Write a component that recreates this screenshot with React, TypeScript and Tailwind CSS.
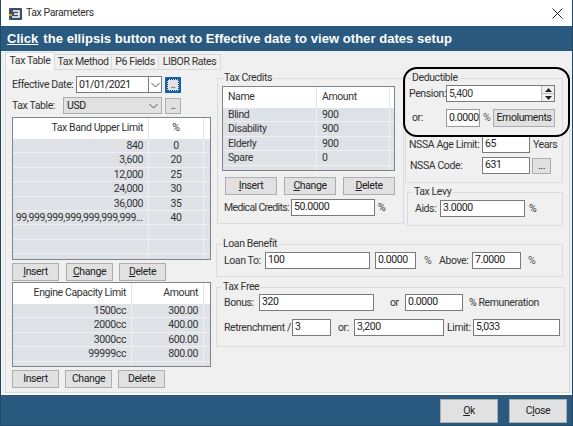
import React from "react";

const inputBase = "flex items-center bg-white border border-[#7a7a7a] h-[17px] px-[2px] text-[10.5px] leading-none text-[#222] overflow-hidden";
const Inp = ({ w, v, cls = "" }: { w: string; v: string; cls?: string }) => (
  <div className={`${inputBase} ${w} ${cls}`}>{v}</div>
);
const Btn = ({ w, h = "h-[18px]", children, cls = "" }: { w: string; h?: string; children: React.ReactNode; cls?: string }) => (
  <div className={`flex items-center justify-center bg-[#e1e1e1] border border-[#adadad] text-[10.5px] leading-none text-[#222] ${w} ${h} ${cls}`}>{children}</div>
);
const U = ({ c }: { c: string }) => <span className="underline">{c}</span>;
const Group = ({ title, cls, children }: { title: string; cls: string; children: React.ReactNode }) => (
  <div className={`border border-[#dcdcdc] ${cls}`}>
    <div className="-mt-[8px] ml-[5px] w-fit bg-[#f0f0f0] px-[1px] text-[10.5px] leading-[14px] text-[#333]">{title}</div>
    {children}
  </div>
);
const Grid = ({ w, h, cols, head, rows, rowCount, aligns }: { w: string; h: string; cols: string[]; head: string[]; rows: string[][]; rowCount: number; aligns: string[] }) => (
  <div className={`border border-[#7f858c] bg-[#f0f0f0] overflow-hidden ${w} ${h}`}>
    <div className="flex h-[21px] bg-white">
      {head.map((t, i) => (
        <div key={i} className={`flex items-center px-[5px] border-r border-[#e5e5e5] text-[10.5px] leading-none text-[#333] ${cols[i]} ${aligns[i]}`}>{t}</div>
      ))}
    </div>
    {Array.from({ length: rowCount }).map((_, r) => (
      <div key={r} className="flex h-[14.4px] bg-[#dee2e6] border-b border-[#f0f0f0]">
        {cols.map((c, i) => (
          <div key={i} className={`flex items-center whitespace-nowrap overflow-hidden px-[5px] pt-[1px] border-r border-[#f0f0f0] text-[10.5px] leading-none text-[#333] ${c} ${aligns[i]}`}>{rows[r]?.[i] ?? ""}</div>
        ))}
      </div>
    ))}
  </div>
);

export default function App() {
  return (
    <div className="relative flex h-[426px] w-[573px] flex-col overflow-hidden whitespace-nowrap border border-[#1f4a66] border-t-0 bg-white tracking-[-0.4px] text-[#222]" style={{ fontFamily: 'Roboto, "Liberation Sans", Arial, sans-serif' }}>
      <div className="flex h-[26px] shrink-0 items-center bg-white pl-[7px] pr-[9px]">
        <svg width="15" height="15" viewBox="0 0 15 15" className="mr-[3px]">
          <rect x="1" y="2" width="13" height="12" rx="1" fill="#3d4f63" />
          <path d="M1 9h3" stroke="#e8912d" strokeWidth="2" />
          <path d="M5 5h6v6H4M6 8h5" fill="none" stroke="#fff" strokeWidth="1.5" />
        </svg>
        <span className="text-[10.5px] text-[#333]">Tax Parameters</span>
        <svg width="11" height="11" viewBox="0 0 11 11" className="ml-auto">
          <path d="M0.5 0.5L10.5 10.5M10.5 0.5L0.5 10.5" stroke="#222" strokeWidth="1" />
        </svg>
      </div>
      <div className="flex h-[25px] shrink-0 items-center bg-[#2a5a80] pl-[6px] text-[13px] font-bold tracking-[0.05px] text-white" style={{ fontFamily: '"Liberation Sans", Arial, sans-serif' }}>
        <span className="underline">Click</span>
        <span className="ml-[5px]">the ellipsis button next to Effective date to view other dates setup</span>
      </div>
      <div className="flex-1 bg-[#f0f0f0] pt-[1px]">
        <div className="flex h-[18px] pl-[4px] text-[10.5px] leading-none text-[#333]">
          <div className="flex w-[50px] items-center justify-center border border-b-0 border-[#d9d9d9] bg-[#f8f8f8]">Tax Table</div>
          <div className="mt-[2px] flex w-[57px] items-center justify-center border-y border-r border-[#d9d9d9]">Tax Method</div>
          <div className="mt-[2px] flex w-[47px] items-center justify-center border-y border-r border-[#d9d9d9]">P6 Fields</div>
          <div className="mt-[2px] flex w-[62px] items-center justify-center border-y border-r border-[#d9d9d9]">LIBOR Rates</div>
        </div>
        <div className="ml-[4px] flex h-[323px] w-[565px] border border-t-0 border-[#d9d9d9] bg-[#f0f0f0]">
          <div className="flex w-[211px] shrink-0 flex-col pl-[6px] pt-[6px]">
            <div className="flex h-[17px] items-center">
              <span className="w-[64px] text-[10.5px] text-[#333]">Effective Date:</span>
              <div className="flex h-[17px] w-[86px] items-center border border-[#7a7a7a] bg-white pl-[2px] text-[10.5px]">
                01/01/2021
                <div className="ml-auto flex h-full w-[13px] items-center justify-center border-l border-[#7a7a7a]">
                  <svg width="9" height="6" viewBox="0 0 9 6"><path d="M0.5 1L4.5 5L8.5 1" fill="none" stroke="#555" /></svg>
                </div>
              </div>
              <div className="ml-[3px] flex h-[16px] w-[16px] items-center justify-center border-2 border-[#0a64c8] bg-[#e1e1e1] text-[10px] leading-none">
                <div className="flex h-full w-full items-end justify-center border border-dotted border-[#333]">..</div>
              </div>
            </div>
            <div className="mt-[4px] flex h-[17px] items-center">
              <span className="w-[51px] text-[10.5px] text-[#333]">Tax Table:</span>
              <div className="flex h-[17px] w-[99px] items-center border border-[#adadad] bg-[#e1e1e1] pl-[3px] pr-[3px] text-[10.5px]">
                USD
                <svg width="9" height="6" viewBox="0 0 9 6" className="ml-auto"><path d="M0.5 1L4.5 5L8.5 1" fill="none" stroke="#555" /></svg>
              </div>
              <Btn w="w-[16px]" h="h-[16px]" cls="ml-[3px] items-end pb-[1px]">..</Btn>
            </div>
            <div className="mt-[3px]">
            <Grid
              w="w-[199px]" h="h-[143px]" cols={["w-[136px]", "w-[55px]"]} head={["Tax Band Upper Limit", "%"]}
              aligns={["justify-end", "justify-center"]} rowCount={9}
              rows={[["840", "0"], ["3,600", "20"], ["12,000", "25"], ["24,000", "30"], ["36,000", "35"], ["99,999,999,999,999,999,999...", "40"]]}
            />
            </div>
            <div className="mt-[3px] flex">
              <Btn w="w-[47px]"><U c="I" />nsert</Btn>
              <Btn w="w-[47px]" cls="ml-[7px]"><U c="C" />hange</Btn>
              <Btn w="w-[47px]" cls="ml-[6px]"><U c="D" />elete</Btn>
            </div>
            <div className="mt-[1px]">
              <Grid
                w="w-[199px]" h="h-[85px]" cols={["w-[119px]", "w-[72px]"]} head={["Engine Capacity Limit", "Amount"]}
                aligns={["justify-end", "justify-end"]} rowCount={5}
                rows={[["1500cc", "300.00"], ["2000cc", "400.00"], ["3000cc", "600.00"], ["99999cc", "800.00"]]}
              />
            </div>
            <div className="mt-[3px] flex">
              <Btn w="w-[47px]">Insert</Btn>
              <Btn w="w-[47px]" cls="ml-[6px]">Change</Btn>
              <Btn w="w-[47px]" cls="ml-[6px]">Delete</Btn>
            </div>
          </div>
          <div className="flex flex-col pl-[0px]">
            <div className="flex">
              <Group title="Tax Credits" cls="mt-[8px] h-[146px] w-[187px] shrink-0">
                <div className="ml-[4px] mt-[1px]">
                  <Grid
                    w="w-[173px]" h="h-[85px]" cols={["w-[94px]", "w-[73px]"]} head={["Name", "Amount"]}
                    aligns={["justify-start", "justify-start"]} rowCount={5}
                    rows={[["Blind", "900"], ["Disability", "900"], ["Elderly", "900"], ["Spare", "0"]]}
                  />
                </div>
                <div className="ml-[7px] mt-[6px] flex">
                  <Btn w="w-[52px]" h="h-[18px]"><U c="I" />nsert</Btn>
                  <Btn w="w-[52px]" h="h-[18px]" cls="ml-[7px]"><U c="C" />hange</Btn>
                  <Btn w="w-[52px]" h="h-[18px]" cls="ml-[7px]"><U c="D" />elete</Btn>
                </div>
                <div className="ml-[6px] mt-[4px] flex items-center text-[10.5px] text-[#333]">
                  <span className="w-[67px] tracking-[-0.65px]">Medical Credits:</span>
                  <Inp w="w-[84px]" v="50.0000" />
                  <span className="ml-[3px]">%</span>
                </div>
              </Group>
              <div className="ml-[1px] flex w-[164px] flex-col">
                <Group title="Deductible" cls="mt-[8px] h-[105px] w-[158px]">
                  <div className="ml-[3px] flex items-center text-[10.5px] text-[#333]">
                    <span className="w-[37px]">Pension:</span>
                    <div className="flex h-[17px] w-[109px] items-center border border-[#7a7a7a] bg-white pl-[2px]">
                      5,400
                      <div className="ml-auto flex h-full w-[13px] flex-col border-l border-[#bbb] bg-[#f0f0f0]">
                        <div className="flex flex-1 items-center justify-center border-b border-[#bbb]"><svg width="7" height="4"><path d="M3.5 0L7 4H0z" fill="#222" /></svg></div>
                        <div className="flex flex-1 items-center justify-center"><svg width="7" height="4"><path d="M0 0H7L3.5 4z" fill="#222" /></svg></div>
                      </div>
                    </div>
                  </div>
                  <div className="ml-[6px] mt-[7px] flex items-center text-[10.5px] text-[#333]">
                    <span className="w-[34px]">or:</span>
                    <Inp w="w-[34px]" v="0.0000" cls="h-[18px] px-[1px] border-[#999]" />
                    <span className="ml-[3px] w-[10px] text-[#555]">%</span>
                    <Btn w="w-[62px]" h="h-[18px]">Emoluments</Btn>
                  </div>
                  <div className="ml-[3px] mt-[9px] flex items-center text-[10.5px] text-[#333]">
                    <span className="w-[73px]">NSSA Age Limit:</span>
                    <Inp w="w-[48px]" v="65" />
                    <span className="ml-[3px]">Years</span>
                  </div>
                  <div className="ml-[4px] mt-[4px] flex items-center text-[10.5px] text-[#333]">
                    <span className="w-[72px]">NSSA Code:</span>
                    <Inp w="w-[48px]" v="631" />
                    <Btn w="w-[19px]" h="h-[16px]" cls="ml-[2px] items-end pb-[1px]">...</Btn>
                  </div>
                </Group>
                <Group title="Tax Levy" cls="mt-[9px] ml-[2px] h-[34px] w-[156px]">
                  <div className="ml-[7px] mt-[1px] flex items-center text-[10.5px] text-[#333]">
                    <span className="w-[25px]">Aids:</span>
                    <Inp w="w-[85px]" v="3.0000" />
                    <span className="ml-[4px]">%</span>
                  </div>
                </Group>
              </div>
            </div>
            <Group title="Loan Benefit" cls="mt-[18px] ml-[-1px] h-[33px] w-[347px]">
              <div className="ml-[7px] mt-[1px] flex items-center text-[10.5px] text-[#333]">
                <span className="w-[41px]">Loan To:</span>
                <Inp w="w-[105px]" v="100" />
                <Inp w="w-[41px]" v="0.0000" cls="ml-[5px]" />
                <span className="ml-[8px] w-[15px] text-[#555]">%</span>
                <span className="w-[33px]">Above:</span>
                <Inp w="w-[49px]" v="7.0000" />
                <span className="ml-[7px] text-[#555]">%</span>
              </div>
            </Group>
            <Group title="Tax Free" cls="mt-[10px] ml-[-1px] h-[60px] w-[349px]">
              <div className="ml-[7px] flex items-center text-[10.5px] text-[#333]">
                <span className="w-[35px]">Bonus:</span>
                <Inp w="w-[115px]" v="320" />
                <span className="ml-[16px] w-[15px]">or</span>
                <Inp w="w-[58px]" v="0.0000" />
                <span className="ml-[6px]">% Remuneration</span>
              </div>
              <div className="ml-[7px] mt-[8px] flex items-center text-[10.5px] text-[#333]">
                <span className="w-[68px]">Retrenchment /</span>
                <Inp w="w-[39px]" v="3" />
                <span className="ml-[7px] w-[16px]">or:</span>
                <Inp w="w-[90px]" v="3,200" />
                <span className="ml-[3px] w-[26px]">Limit:</span>
                <Inp w="w-[87px]" v="5,033" />
              </div>
            </Group>
          </div>
        </div>
        <div className="h-[2px] bg-white" />
      </div>
      <div className="flex h-[31px] shrink-0 items-start justify-end gap-[11px] bg-[#2a5a80] pr-[5px] pt-[4px]">
        <Btn w="w-[58px]" h="h-[24px]"><U c="O" />k</Btn>
        <Btn w="w-[58px]" h="h-[24px]"><span>C<U c="l" />ose</span></Btn>
      </div>
      <div className="pointer-events-none absolute left-[402px] top-[67px] h-[70px] w-[167px] rounded-[14px] border-2 border-black" />
    </div>
  );
}
